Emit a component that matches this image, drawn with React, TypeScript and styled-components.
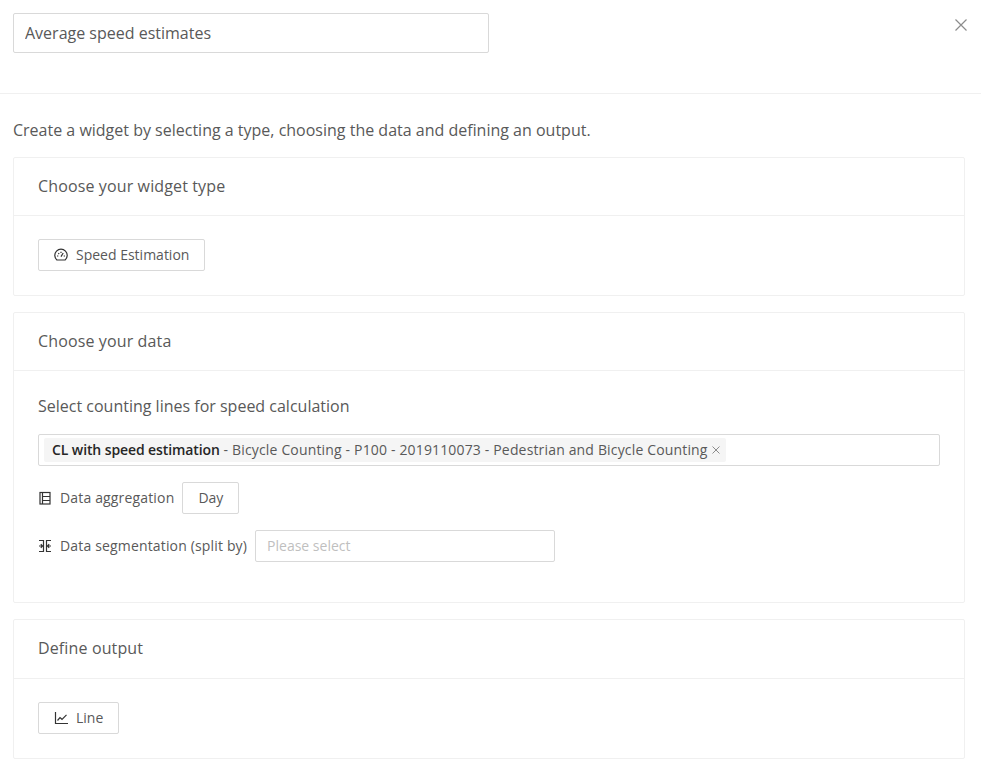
import styled, { createGlobalStyle } from "styled-components"
import { ReactNode } from "react"

const GlobalStyle = createGlobalStyle`
  html, body {
    margin: 0;
    padding: 0;
    background: #fff;
    font-family: "Open Sans", "Liberation Sans", sans-serif;
    color: #595959;
    overflow: hidden;
  }
`

const GaugeIcon = () => (
  <svg width="14" height="14" viewBox="0 0 14 14" fill="none" stroke="#333" strokeWidth="1.2">
    <path d="M2.9 12h8.2A6.2 6.2 0 1 0 2.9 12z" />
    <path d="M7 8.6 9.2 5M3 8h1.3M9.7 8h1.3M4.3 5.1l.9.9M7 3.8v1.3" />
  </svg>
)

const LineChartIcon = () => (
  <svg width="14" height="14" viewBox="0 0 14 14" fill="none" stroke="#333" strokeWidth="1.2">
    <path d="M1.5 1v11.5H14" />
    <path d="M3.5 9.5 6 6.5l2 1.8 4.5-4.5" />
  </svg>
)

const AggregationIcon = () => (
  <svg width="12" height="14" viewBox="0 0 12 14" fill="none" stroke="#333" strokeWidth="1.2">
    <rect x="1" y="1.5" width="10" height="11.5" />
    <path d="M3.5 1.5V13M3.5 5.5H11M3.5 9.5H11" />
  </svg>
)

const SegmentationIcon = () => (
  <svg width="14" height="14" viewBox="0 0 14 14" fill="none" stroke="#333" strokeWidth="1.2">
    <path d="M1 1.5h4.5v11H1M13 1.5H8.5v11H13" />
    <path d="M1 7h3M2.8 5.2 4.6 7 2.8 8.8M13 7h-3M11.2 5.2 9.4 7l1.8 1.8" />
  </svg>
)

const Card = ({ title, tall, children }: { title: string; tall?: boolean; children: ReactNode }) => (
  <CardBox>
    <CardHeader $tall={tall}>{title}</CardHeader>
    <CardBody>{children}</CardBody>
  </CardBox>
)

export default function App() {
  return (
    <>
      <GlobalStyle />
      <Page>
        <TopBar>
          <TitleInput defaultValue="Average speed estimates" />
          <CloseButton>
            <svg width="12" height="12" viewBox="0 0 12 12" stroke="#8c8c8c" strokeWidth="1.2">
              <path d="M.5.5l11 11M11.5.5l-11 11" />
            </svg>
          </CloseButton>
        </TopBar>
        <Content>
          <Intro>Create a widget by selecting a type, choosing the data and defining an output.</Intro>
          <Card title="Choose your widget type">
            <TypeButton>
              <GaugeIcon />
              Speed Estimation
            </TypeButton>
          </Card>
          <Card title="Choose your data">
            <DataBody>
              <FieldLabel>Select counting lines for speed calculation</FieldLabel>
              <MultiSelect>
                <Tag>
                  <strong>CL with speed estimation</strong> - Bicycle Counting - P100 - 2019110073 - Pedestrian and Bicycle Counting
                  <TagClose>
                    <svg width="8" height="8" viewBox="0 0 8 8" stroke="#8c8c8c" strokeWidth="1">
                      <path d="M.5.5l7 7M7.5.5l-7 7" />
                    </svg>
                  </TagClose>
                </Tag>
              </MultiSelect>
              <OptionRow>
                <OptionIcon><AggregationIcon /></OptionIcon>
                <OptionLabel>Data aggregation</OptionLabel>
                <SmallButton>Day</SmallButton>
              </OptionRow>
              <OptionRow>
                <OptionIcon><SegmentationIcon /></OptionIcon>
                <OptionLabel>Data segmentation (split by)</OptionLabel>
                <SelectBox>Please select</SelectBox>
              </OptionRow>
            </DataBody>
          </Card>
          <Card title="Define output" tall>
            <TypeButton>
              <LineChartIcon />
              Line
            </TypeButton>
          </Card>
        </Content>
      </Page>
    </>
  )
}

const Page = styled.div`
  width: 981px;
  height: 765px;
  overflow: hidden;
`

const TopBar = styled.div`
  display: flex;
  justify-content: space-between;
  align-items: flex-start;
  height: 94px;
  box-sizing: border-box;
  padding: 13px 14px 0 13px;
  border-bottom: 1px solid #f0f0f0;
`

const TitleInput = styled.input`
  width: 476px;
  height: 40px;
  box-sizing: border-box;
  padding: 0 11px;
  border: 1px solid #d9d9d9;
  border-radius: 2px;
  font: 16px "Open Sans", sans-serif;
  color: #595959;
  outline: none;
`

const CloseButton = styled.div`
  display: flex;
  padding-top: 6px;
`

const Content = styled.div`
  display: flex;
  flex-direction: column;
  gap: 16px;
  padding: 25px 16px 0 13px;
`

const Intro = styled.div`
  font-size: 16px;
  line-height: 22px;
`

const CardBox = styled.section`
  border: 1px solid #f0f0f0;
  border-radius: 2px;
`

const CardHeader = styled.div<{ $tall?: boolean }>`
  height: ${p => (p.$tall ? 59 : 58)}px;
  box-sizing: border-box;
  padding: 0 24px 2px;
  display: flex;
  align-items: center;
  font-size: 16px;
  letter-spacing: 0.13px;
  border-bottom: 1px solid #f0f0f0;
`

const CardBody = styled.div`
  padding: 23px 24px 24px;
`

const TypeButton = styled.div`
  display: inline-flex;
  align-items: center;
  gap: 8px;
  height: 32px;
  box-sizing: border-box;
  padding: 0 15px 2px;
  border: 1px solid #d9d9d9;
  border-radius: 2px;
  font-size: 14px;
  vertical-align: top;

  svg {
    margin-top: 2px;
  }
`

const DataBody = styled.div`
  display: flex;
  flex-direction: column;
  padding-top: 1px;
`

const FieldLabel = styled.div`
  font-size: 16px;
  line-height: 22px;
  margin-bottom: 17px;
`

const MultiSelect = styled.div`
  display: flex;
  align-items: center;
  height: 32px;
  box-sizing: border-box;
  padding: 0 5px;
  border: 1px solid #d9d9d9;
  border-radius: 2px;
  margin-bottom: 16px;
`

const Tag = styled.div`
  display: flex;
  align-items: center;
  height: 24px;
  box-sizing: border-box;
  padding: 0 6px 2px 8px;
  background: #f5f5f5;
  border-radius: 2px;
  font-size: 14px;
  letter-spacing: 0.16px;
  white-space: pre-wrap;

  strong {
    font-weight: 600;
    letter-spacing: -0.1px;
    color: #262626;
  }
`

const TagClose = styled.span`
  display: inline-flex;
  margin: 2px 0 0 4px;
`

const OptionRow = styled.div`
  display: flex;
  align-items: center;
  height: 32px;
  font-size: 14px;
  margin-bottom: 16px;
`

const OptionIcon = styled.span`
  display: inline-flex;
  justify-content: center;
  width: 14px;
  margin-right: 8px;
`

const OptionLabel = styled.span`
  letter-spacing: 0.16px;
  margin-bottom: 2px;
`

const SmallButton = styled.div`
  display: flex;
  align-items: center;
  height: 32px;
  box-sizing: border-box;
  padding: 0 15px 2px;
  margin-left: 8px;
  border: 1px solid #d9d9d9;
  border-radius: 2px;
`

const SelectBox = styled.div`
  display: flex;
  align-items: center;
  width: 300px;
  height: 32px;
  box-sizing: border-box;
  padding: 0 11px 2px;
  margin-left: 8px;
  border: 1px solid #d9d9d9;
  border-radius: 2px;
  color: #bfbfbf;
`
